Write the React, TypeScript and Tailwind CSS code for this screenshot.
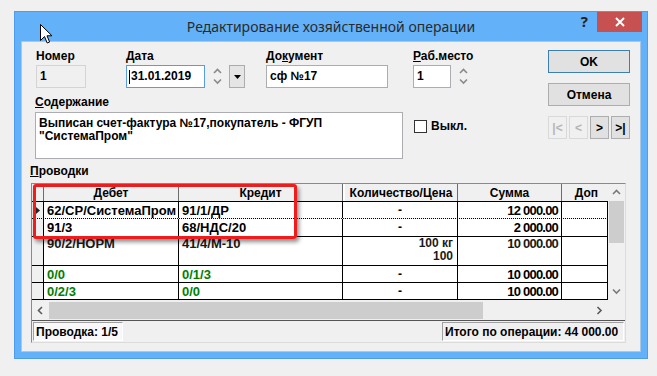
import React from "react";

const FONT = "font-['Liberation_Sans',Arial,sans-serif]";

function Chevron({ dir, className }: { dir: "up" | "down" | "left" | "right"; className?: string }) {
  const d = {
    up: "M1 5 L4.5 1.5 L8 5",
    down: "M1 1.5 L4.5 5 L8 1.5",
    left: "M5 1 L1.5 4.5 L5 8",
    right: "M1.5 1 L5 4.5 L1.5 8",
  }[dir];
  const vertical = dir === "up" || dir === "down";
  return (
    <svg
      width={vertical ? 9 : 7}
      height={vertical ? 7 : 9}
      viewBox={vertical ? "0 0 9 7" : "0 0 7 9"}
      className={className}
    >
      <path d={d} fill="none" stroke="currentColor" strokeWidth="1.6" />
    </svg>
  );
}

function Spinner() {
  return (
    <div className="flex flex-col items-center justify-between h-[23px] py-[3px] text-[#8a8a8a]">
      <Chevron dir="up" />
      <Chevron dir="down" />
    </div>
  );
}

function Label({ children, className = "" }: { children: React.ReactNode; className?: string }) {
  return <div className={`text-[12px] leading-[14px] font-bold text-black ${className}`}>{children}</div>;
}

const colW = ["w-[135px]", "w-[164px]", "w-[115px]", "w-[104px]", "w-[46px]"];

type RowData = {
  cells: string[];
  h: string;
  green?: boolean;
  marker?: boolean;
  dotted?: boolean;
  top?: boolean;
};

const rows: RowData[] = [
  { cells: ["62/СР/СистемаПром", "91/1/ДР", "-", "12 000.00", ""], h: "h-[17px]", marker: true, dotted: true },
  { cells: ["91/3", "68/НДС/20", "-", "2 000.00", ""], h: "h-[18px]" },
  { cells: ["90/2/НОРМ", "41/4/М-10", "100 кг\n100", "10 000.00", ""], h: "h-[29px]", top: true },
  { cells: ["0/0", "0/1/3", "-", "10 000.00", ""], h: "h-[17px]", green: true },
  { cells: ["0/2/3", "0/0", "-", "10 000.00", ""], h: "h-[17px]", green: true },
];

function GridRow({ r }: { r: RowData }) {
  const bottom = r.dotted ? "border-b border-dotted border-black" : "border-b border-black";
  const align = r.top ? "items-start" : "items-center";
  return (
    <div className={`flex ${r.h} ${bottom}`}>
      <div className="w-[12px] h-full bg-[#f0f0f0] border-r border-black flex items-center justify-center">
        {r.marker && (
          <svg width="4" height="7" viewBox="0 0 4 7">
            <path d="M0 0 L4 3.5 L0 7 Z" fill="#222" />
          </svg>
        )}
      </div>
      {r.cells.map((c, i) => {
        const color = r.green && i < 2 ? "text-[#007f00]" : r.top ? "text-[#1a1a1a]" : "text-black";
        const just =
          i < 2
            ? "justify-start pl-[3px]"
            : i === 2
              ? c === "-"
                ? "justify-center text-[12px]"
                : "justify-end pr-[4px] text-right text-[12px]"
              : "justify-end pr-[3px] tracking-[-0.8px]";
        return (
          <div
            key={i}
            className={`${colW[i]} h-full flex ${align} ${just} border-r border-black bg-white ${color} whitespace-pre leading-[13px] overflow-hidden`}
          >
            {c}
          </div>
        );
      })}
    </div>
  );
}

function NavButton({ children, disabled }: { children: React.ReactNode; disabled?: boolean }) {
  return (
    <div
      className={`w-[19px] h-[23px] flex items-center justify-center text-[12px] font-bold ${
        disabled ? "border border-[#d9d9d9] text-[#b5b5b5] bg-[#f0f0f0]" : "border border-[#adadad] bg-[#e1e1e1] text-black"
      }`}
    >
      {children}
    </div>
  );
}

export default function App() {
  return (
    <div className={`relative w-[657px] h-[376px] bg-[#f0f0f0] overflow-hidden pt-[11px] pl-[14px] ${FONT}`}>
      {/* window frame */}
      <div className="w-[634px] h-[348px] bg-[#63b1f8] border border-[#4f9de8] flex flex-col px-[6px] pb-[6px]">
        {/* title bar */}
        <div className="relative h-[29px] flex items-center justify-center">
          <span className="font-['Noto_Sans',sans-serif] text-[14px] text-[#2a2a2a] mt-[-1px]">
            Редактирование хозяйственной операции
          </span>
          <div className="absolute right-[-1px] top-0 flex items-start">
            <span className="font-['Noto_Sans',sans-serif] text-[15px] font-bold text-[#222] leading-[20px] mr-[9px] mt-[-1px]">
              ?
            </span>
            <div className="w-[45px] h-[20px] bg-[#c75050] flex items-center justify-center">
              <svg width="10" height="10" viewBox="0 0 10 10">
                <path d="M1 1 L9 9 M9 1 L1 9" stroke="white" strokeWidth="2" />
              </svg>
            </div>
          </div>
        </div>

        {/* client area */}
        <div className="flex-1 bg-[#f0f0f0] border border-[#a9c8e6] flex flex-col">
          <div className="flex">
            {/* left part */}
            <div className="flex-1 flex flex-col">
              <div className="flex pt-[7px]">
                <div className="ml-[14px] flex flex-col">
                  <Label className="mb-[2px]">Номер</Label>
                  <div className="w-[50px] h-[23px] bg-[#f0f0f0] border border-[#d4d4d4] text-[12px] font-bold pl-[3px] leading-[21px]">
                    1
                  </div>
                </div>
                <div className="ml-[40px] flex flex-col">
                  <Label className="mb-[2px]">
                    <u>Д</u>ата
                  </Label>
                  <div className="flex items-start">
                    <div className="w-[79px] h-[23px] bg-white border border-[#569de5] text-[12px] font-bold pl-[2px] leading-[21px] flex items-center">
                      <span className="w-[1px] h-[14px] bg-black mr-[1px]" />
                      31.01.2019
                    </div>
                    <div className="ml-[5px] w-[14px] flex justify-center">
                      <Spinner />
                    </div>
                    <div className="ml-[5px] w-[16px] h-[23px] bg-[#e5e5e5] border border-[#acacac] flex items-center justify-center">
                      <svg width="7" height="4" viewBox="0 0 7 4">
                        <path d="M0 0 L7 0 L3.5 4 Z" fill="#000" />
                      </svg>
                    </div>
                  </div>
                </div>
                <div className="ml-[21px] flex flex-col">
                  <Label className="mb-[2px]">
                    До<u>к</u>умент
                  </Label>
                  <div className="w-[122px] h-[23px] bg-white border border-[#abadb3] text-[12px] font-bold pl-[3px] leading-[21px]">
                    сф №17
                  </div>
                </div>
                <div className="ml-[25px] flex flex-col">
                  <Label className="mb-[2px]">
                    <u>Р</u>аб.место
                  </Label>
                  <div className="flex items-start">
                    <div className="w-[38px] h-[23px] bg-white border border-[#abadb3] text-[12px] font-bold pl-[3px] leading-[21px]">
                      1
                    </div>
                    <div className="ml-[6px] w-[12px] flex justify-center">
                      <Spinner />
                    </div>
                  </div>
                </div>
              </div>

              <Label className="ml-[13px] mt-[7px] mb-[3px]">
                <u>С</u>одержание
              </Label>
              <div className="flex items-start">
                <div className="ml-[13px] w-[368px] h-[47px] bg-white border border-[#abadb3] text-[12px] font-bold leading-[13px] px-[3px] pt-[4px] text-black">
                  Выписан счет-фактура №17,покупатель - ФГУП
                  <br />
                  "СистемаПром"
                </div>
                <div className="ml-[11px] mt-[5px] flex items-center">
                  <div className="w-[13px] h-[13px] bg-white border border-[#333]" />
                  <span className="ml-[4px] text-[12px] font-bold">Выкл.</span>
                </div>
              </div>
            </div>

            {/* right buttons */}
            <div className="w-[82px] mr-[10px] pt-[8px] flex flex-col">
              <div className="h-[23px] bg-[#e1e1e1] border border-[#3c7fb1] flex items-center justify-center text-[12px] font-bold">
                OK
              </div>
              <div className="mt-[10px] h-[23px] bg-[#e1e1e1] border border-[#adadad] flex items-center justify-center text-[12px] font-bold">
                Отмена
              </div>
              <div className="mt-[10px] flex justify-between">
                <NavButton disabled>|&lt;</NavButton>
                <NavButton disabled>&lt;</NavButton>
                <NavButton>&gt;</NavButton>
                <NavButton>&gt;|</NavButton>
              </div>
            </div>
          </div>

          <Label className="ml-[8px] mt-[5px] mb-[5px]">
            <u>П</u>роводки
          </Label>

          {/* grid */}
          <div className="relative ml-[9px] w-[595px] h-[160px] border border-t-[#8a8a8a] border-l-[#8a8a8a] border-r-[#dcdcdc] border-b-[#dcdcdc] flex flex-col text-[13px] font-bold">
            <div className="flex h-[116px]">
              <div className="w-[576px] flex flex-col">
                {/* header */}
                <div className="flex h-[18px] bg-[#f0f0f0] border-b border-black text-[12px]">
                  <div className="w-[12px] border-r border-[#6d6d6d]" />
                  <div className={`${colW[0]} border-r border-[#6d6d6d] flex items-center justify-center`}>Дебет</div>
                  <div className={`${colW[1]} border-r border-[#6d6d6d] flex items-center justify-center`}>Кредит</div>
                  <div className={`${colW[2]} border-r border-[#6d6d6d] border-l-2 border-l-white flex items-center justify-center whitespace-nowrap`}>
                    Количество/Цена
                  </div>
                  <div className={`${colW[3]} border-r border-[#6d6d6d] flex items-center justify-center`}>Сумма</div>
                  <div className={`${colW[4]} flex items-center justify-end pr-[10px]`}>Доп</div>
                </div>
                {rows.map((r, i) => (
                  <GridRow key={i} r={r} />
                ))}
              </div>
              {/* vertical scrollbar */}
              <div className="w-[17px] h-full bg-[#f0f0f0] flex flex-col items-center text-[#7a7a7a]">
                <div className="h-[17px] flex items-center justify-center">
                  <Chevron dir="up" />
                </div>
                <div className="w-[15px] h-[42px] bg-[#cdcdcd]" />
                <div className="flex-1" />
                <div className="h-[17px] flex items-center justify-center">
                  <Chevron dir="down" />
                </div>
              </div>
            </div>

            {/* horizontal scrollbar */}
            <div className="flex h-[20px] bg-[#f0f0f0]">
              <div className="w-[576px] flex items-center text-[#5a5a5a]">
                <div className="w-[17px] flex justify-center">
                  <Chevron dir="left" />
                </div>
                <div className="w-[434px] h-[17px] bg-[#cdcdcd]" />
                <div className="flex-1" />
                <div className="w-[17px] flex justify-center">
                  <Chevron dir="right" />
                </div>
              </div>
              <div className="w-[17px]" />
            </div>

            {/* status bar */}
            <div className="flex-1 bg-[#f0f0f0] border-t border-[#555] flex items-center justify-between px-[1px] text-[12px]">
              <div className="w-[90px] h-[19px] bg-[#f8f8f8] border border-t-[#a0a0a0] border-l-[#a0a0a0] border-r-white border-b-white flex items-center pl-[2px] whitespace-nowrap">
                Проводка: 1/5
              </div>
              <div className="w-[182px] h-[19px] border border-t-[#a0a0a0] border-l-[#a0a0a0] border-r-white border-b-white flex items-center pl-[2px] whitespace-nowrap">
                Итого по операции: 44 000.00
              </div>
            </div>

            {/* red highlight */}
            <div className="absolute left-[1px] top-0 w-[264px] h-[55px] border-[3px] border-[#ee1c1c] rounded-[3px] shadow-[2px_3px_4px_rgba(0,0,0,0.45)]" />
          </div>
        </div>
      </div>

      {/* mouse cursor */}
      <svg className="absolute left-[40px] top-[24px]" width="13" height="21" viewBox="0 0 13 21">
        <path d="M0.5 0.5 L0.5 16.5 L4.5 12.5 L7.2 19 L9.6 18 L7 11.8 L12 11.8 Z" fill="white" stroke="black" strokeWidth="1" />
      </svg>
    </div>
  );
}
